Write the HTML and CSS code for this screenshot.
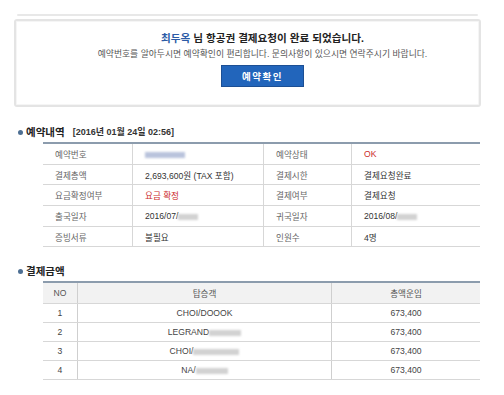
FILE: index.html
```html
<!DOCTYPE html>
<html lang="ko">
<head>
  <meta charset="UTF-8">
  <title>결제요청 완료</title>
  <link rel="stylesheet" href="styles.css">
</head>
<body>
  <div class="page">
    <!-- bord du bloc précédent -->
    <div class="prev-edge"></div>

    <!-- message de confirmation -->
    <div class="notice">
      <p class="notice-title"><span class="name">최두옥</span> 님 항공권 결제요청이 완료 되었습니다.</p>
      <p class="notice-desc">예약번호를 알아두시면 예약확인이 편리합니다. 문의사항이 있으시면 연락주시기 바랍니다.</p>
      <button class="btn-confirm">예약확인</button>
    </div>

    <!-- 예약내역 -->
    <h3 class="sec-title"><span class="dot"></span>예약내역 <span class="sec-date">[2016년 01월 24일 02:56]</span></h3>
    <table class="info-table">
      <tr>
        <th>예약번호</th>
        <td><span class="blur blur-blue"></span></td>
        <th>예약상태</th>
        <td class="red">OK</td>
      </tr>
      <tr>
        <th>결제총액</th>
        <td>2,693,600원 (TAX 포함)</td>
        <th>결제시한</th>
        <td>결제요청완료</td>
      </tr>
      <tr>
        <th>요금확정여부</th>
        <td class="red">요금 확정</td>
        <th>결제여부</th>
        <td>결제요청</td>
      </tr>
      <tr>
        <th>출국일자</th>
        <td>2016/07/<span class="blur blur-s"></span></td>
        <th>귀국일자</th>
        <td>2016/08/<span class="blur blur-s"></span></td>
      </tr>
      <tr>
        <th>증빙서류</th>
        <td>불필요</td>
        <th>인원수</th>
        <td>4명</td>
      </tr>
    </table>

    <!-- 결제금액 -->
    <h3 class="sec-title sec-pay"><span class="dot"></span>결제금액</h3>
    <table class="pay-table">
      <tr>
        <th class="col-no">NO</th>
        <th class="col-name">탑승객</th>
        <th>총액운임</th>
      </tr>
      <tr>
        <td>1</td>
        <td>CHOI/DOOOK</td>
        <td>673,400</td>
      </tr>
      <tr>
        <td>2</td>
        <td>LEGRAND<span class="blur blur-m"></span></td>
        <td>673,400</td>
      </tr>
      <tr>
        <td>3</td>
        <td>CHOI/<span class="blur blur-l"></span></td>
        <td>673,400</td>
      </tr>
      <tr>
        <td>4</td>
        <td>NA/<span class="blur blur-m"></span></td>
        <td>673,400</td>
      </tr>
    </table>
  </div>
</body>
</html>
```

FILE: styles.css
```css
body {
  margin: 0;
  background-color: #fff;
  color: #333;
  font-family: "Liberation Sans", "Noto Sans CJK KR", sans-serif;
}
.page {
  width: 504px;
}
/* bord du bloc précédent */
.prev-edge {
  margin: 14px 26px 0 17px;
  height: 2px;
  background-color: #e8e8e8;
  border-radius: 1px;
}
/* boîte de message */
.notice {
  margin: 3px 23px 0 14px;
  height: 75px;
  border: 2px solid #e4e4e4;
  border-radius: 3px;
  box-shadow: inset 0 0 0 1px #f5f5f5;
  text-align: center;
  padding: 9px 0 0 30px;
  box-sizing: content-box;
}
.notice p {
  margin: 0;
}
.notice-title {
  font-size: 10.6px;
  line-height: 16px;
  font-weight: bold;
  color: #222;
}
.notice-title .name {
  color: #2c5ba6;
}
.notice-desc {
  margin-top: 2px !important;
  font-size: 8.8px;
  line-height: 12px;
  color: #555;
}
.btn-confirm {
  margin-top: 5px;
  width: 83px;
  height: 22px;
  border: 1px solid #1c4f94;
  background-color: #2265bb;
  color: #fff;
  font-family: "Noto Sans CJK KR", sans-serif;
  font-size: 9.5px;
  font-weight: bold;
  letter-spacing: 1.5px;
  padding: 0;
  cursor: pointer;
}
/* titres de section */
.sec-title {
  margin: 18px 0 3px 18px;
  font-size: 10.5px;
  line-height: 14px;
  font-weight: bold;
  color: #222;
  display: flex;
  align-items: center;
}
.sec-pay {
  margin-top: 17px;
}
.dot {
  width: 5px;
  height: 5px;
  border-radius: 50%;
  background-color: #4d6f93;
  margin-right: 3px;
}
.sec-date {
  margin-left: 8px;
  font-size: 9px;
  color: #333;
}
/* tableaux */
table {
  border-collapse: collapse;
  margin-left: 43px;
  width: 437px;
  table-layout: fixed;
  border-top: 2px solid #8c9cad;
  font-size: 8.6px;
}
th, td {
  padding: 0;
  border-bottom: 1px solid #d7d7d7;
  font-weight: normal;
  white-space: nowrap;
}
.info-table th,
.info-table td {
  height: 19.7px;
  text-align: left;
}
.info-table th {
  width: 77px;
  padding-left: 12px;
  color: #666;
  border-right: 1px solid #d7d7d7;
}
.info-table td {
  padding-left: 12px;
  color: #333;
}
.info-table td:nth-child(2) {
  width: 118px;
  border-right: 1px solid #d7d7d7;
}
.info-table th:nth-child(3) {
  width: 75px;
}
.red {
  color: #cc2b2b !important;
}
.pay-table th {
  height: 20px;
  background-color: #f2f2f2;
  color: #555;
  text-align: center;
}
.pay-table td {
  height: 18px;
  text-align: center;
  color: #444;
}
.pay-table .col-no {
  width: 34px;
}
.pay-table .col-name {
  width: 253px;
}
.pay-table th:nth-child(-n+2),
.pay-table td:nth-child(-n+2) {
  border-right: 1px solid #cfcfcf;
}
/* zones floutées */
.blur {
  display: inline-block;
  vertical-align: middle;
  height: 6px;
  background-color: #d2d2d2;
  filter: blur(1.2px);
}
.blur-blue {
  width: 40px;
  background-color: #b9c3dc;
}
.blur-s {
  width: 20px;
}
.blur-m {
  width: 32px;
}
.blur-l {
  width: 46px;
}
```
